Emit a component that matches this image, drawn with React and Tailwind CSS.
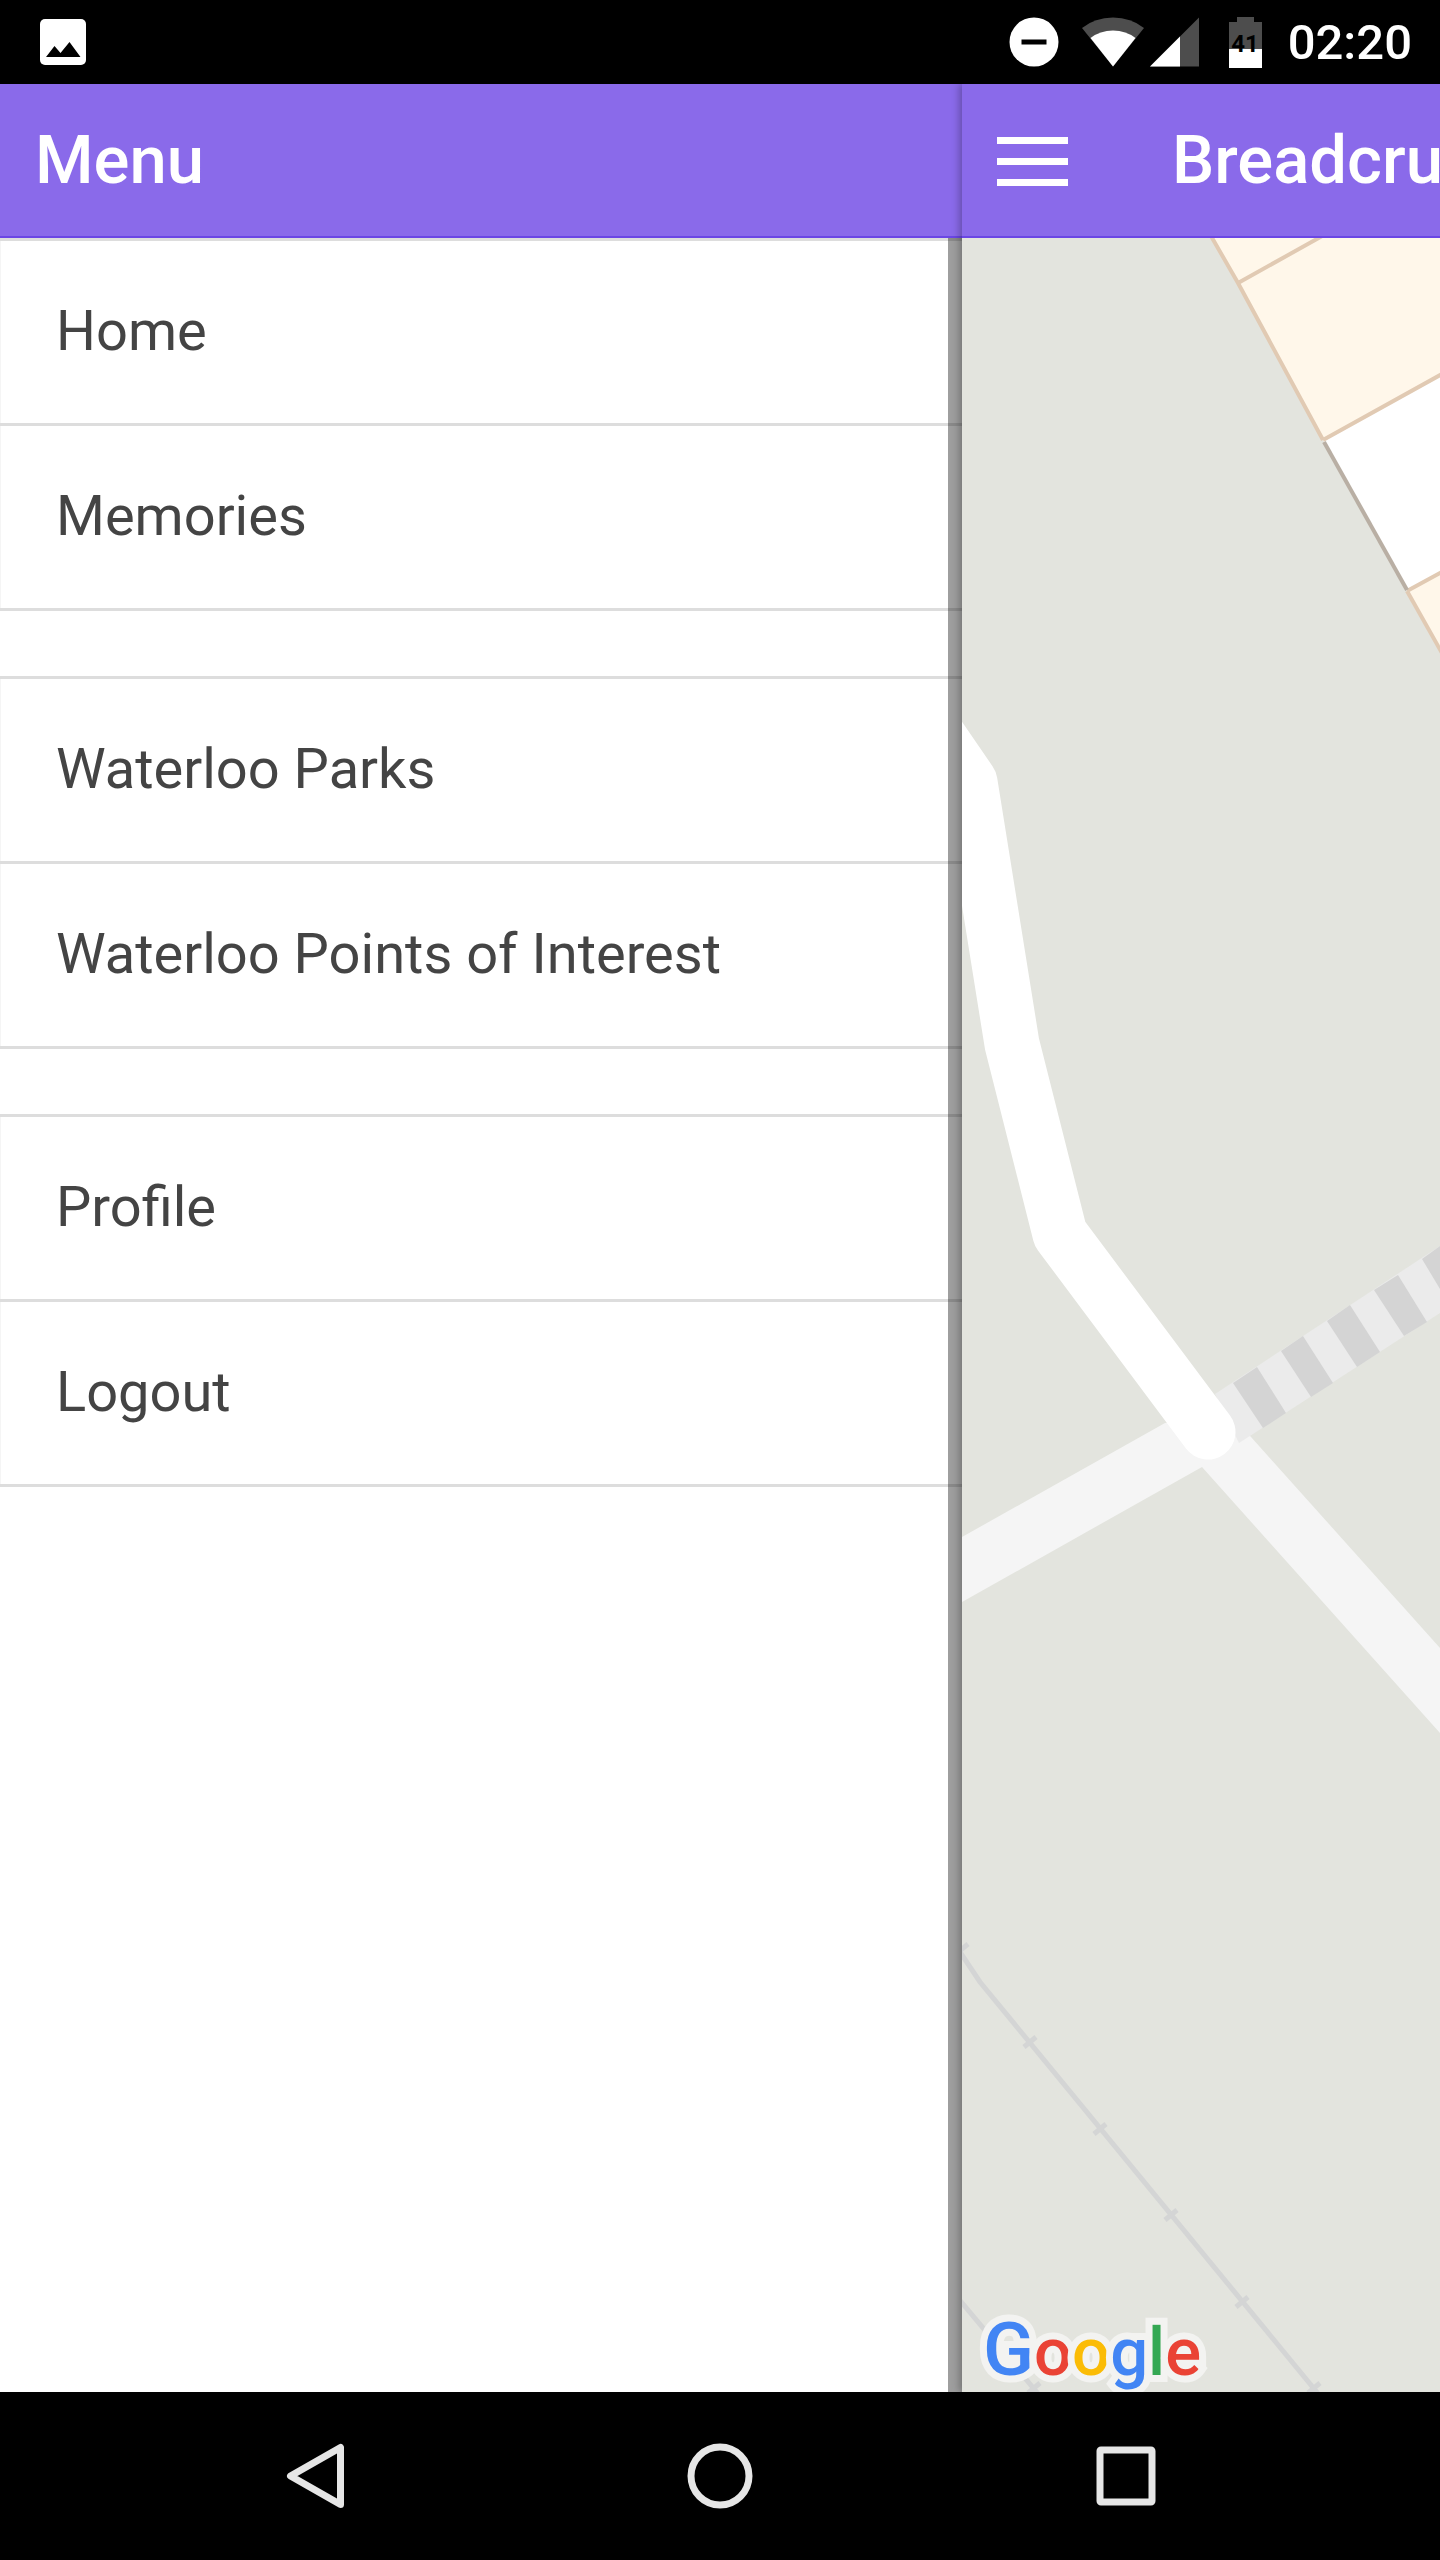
import React from "react";

const groups = [
  ["Home", "Memories"],
  ["Waterloo Parks", "Waterloo Points of Interest"],
  ["Profile", "Logout"],
];

function StatusBar() {
  return (
    <div className="flex h-[84px] shrink-0 items-center justify-between bg-black pl-10 pr-7 text-white">
      <svg className="h-[46px] w-[46px]" viewBox="0 0 46 46" role="img" aria-label="Picture saved">
        <rect width="46" height="46" rx="5" fill="#fff" />
        <path d="M6 38 14.5 27 20.500 34 29.500 23 40.500 38Z" fill="#000" />
      </svg>
      <div className="flex items-center">
        <svg className="mr-[23px] h-[50px] w-[50px]" viewBox="0 0 50 50" role="img" aria-label="Do not disturb">
          <circle cx="25" cy="25" r="24.500" fill="#fff" />
          <rect x="12.500" y="22.500" width="25" height="5" fill="#000" />
        </svg>
        <svg className="mr-1.5 h-[50px] w-[62px]" viewBox="0 0 62 50" role="img" aria-label="Wi-Fi">
          <path d="M31 49.500 0 11Q13 .5 31 .5T62 11Z" fill="#4d4d4d" />
          <path d="M31 49.500 8.500 21Q18 13.500 31 13.500T53.500 21Z" fill="#fff" />
        </svg>
        <svg className="mr-[30px] h-[50px] w-[49px]" viewBox="0 0 49 50" role="img" aria-label="Mobile signal">
          <path d="M0 49.500 49 .5V49.500Z" fill="#4d4d4d" />
          <path d="M0 49.500 30 19.500V49.500Z" fill="#fff" />
        </svg>
        <svg className="mr-[26px] h-[51px] w-[33px]" viewBox="0 0 33 51" role="img" aria-label="Battery 41 percent">
          <path d="M8 0H25V5H33V32H0V5H8Z" fill="#4d4d4d" />
          <rect y="32" width="33" height="19" fill="#fff" />
          <text x="16" y="35" textAnchor="middle" className="font-[Roboto,sans-serif] text-[24px] font-bold" fill="#000">
            41
          </text>
        </svg>
        <span className="pt-0.5 text-[49px] font-medium leading-[60px]">02:20</span>
      </div>
    </div>
  );
}

function MenuPanel() {
  return (
    <aside className="flex min-w-0 flex-col bg-white">
      <header className="flex h-[154px] shrink-0 items-center border-b-2 border-[#6b46e5] bg-[#8a6aea] px-[35px]">
        <h2 className="text-[67px] font-medium leading-[80px] text-white">Menu</h2>
      </header>
      <nav className="relative flex flex-1 flex-col gap-[65px]" aria-label="Menu">
        {groups.map((items) => (
          <ul key={items[0]} className="border-t-[3px] border-[#dddddd]">
            {items.map((item) => (
              <li key={item} className="border-b-[3px] border-[#dddddd]">
                <a
                  href="#"
                  className="flex h-[182px] items-center border-l border-[#f5f5f5] px-[55px] pb-0.5 text-[56px] leading-[64px] text-[#444444]"
                >
                  {item}
                </a>
              </li>
            ))}
          </ul>
        ))}
        <div className="absolute inset-y-0 right-0 w-3.5 bg-black/38" />
      </nav>
    </aside>
  );
}

const railTicks = [
  [962, 1949],
  [1030, 2042],
  [1100, 2129],
  [1171, 2215],
  [1242, 2302],
  [1314, 2388],
  [1034, 2388],
];

function MapView() {
  return (
    <div className="relative min-h-0 flex-1 overflow-hidden bg-[#e3e4de]">
      <svg
        className="absolute inset-0 h-full w-full"
        viewBox="962 238 478 2154"
        preserveAspectRatio="xMinYMin slice"
        aria-hidden="true"
      >
        <path d="M1212 236 1238 283 1323 440 1407 591 1442 653V236Z" fill="#fff7ea" />
        <path d="M1323 440 1442 374V572L1407 591Z" fill="#fff" />
        <g fill="none" stroke="#e1cab3" strokeWidth="4">
          <path d="M1211 236 1238 283 1323 440" />
          <path d="M1407 591 1442 653" />
          <path d="M1238 283 1324 235M1323 440 1442 374M1407 591 1442 572" />
        </g>
        <path d="M1324 442 1407 590" fill="none" stroke="#b9afa4" strokeWidth="4" />

        <path d="M962 1537 1165 1423 1230 1415 1251 1437 1440 1648V1733L1202 1467 962 1602Z" fill="#f5f5f5" />
        <path d="M1215 1394 1440 1246V1313L1239 1443Z" fill="#ebebeb" />
        <g fill="#d4d4d4">
          <path d="M1233 1383 1257 1367 1286 1413 1263 1428Z" />
          <path d="M1281 1351 1303 1336 1333 1383 1311 1397Z" />
          <path d="M1327 1321 1350 1305 1380 1352 1357 1367Z" />
          <path d="M1374 1290 1398 1275 1427 1322 1404 1336Z" />
          <path d="M1422 1259 1440 1246V1289Z" />
        </g>
        <path
          d="M904 686 970 782 1012 1044 1060 1234 1208 1432"
          fill="none"
          stroke="#fff"
          strokeWidth="55"
          strokeLinecap="round"
          strokeLinejoin="round"
        />

        <g fill="none" stroke="#d4d5d5" strokeWidth="5">
          <path d="M958 1949 980 1982 1320 2396" />
          <path d="M958 2298 1040 2396" />
          {railTicks.map(([x, y]) => (
            <path key={`${x}-${y}`} d={`M${x - 6} ${y + 5} ${x + 6} ${y - 5}`} />
          ))}
        </g>
      </svg>
      <a
        href="#"
        aria-label="Google"
        className="absolute bottom-0 left-[21px] text-[67px] font-medium leading-[80px] [-webkit-text-stroke:14px_#f3f3f1] [paint-order:stroke_fill] [stroke-linejoin:round]"
      >
        <span className="text-[75px] leading-none text-[#4285f4]">G</span>
        <span className="text-[#ea4335]">o</span>
        <span className="text-[#fbbc05]">o</span>
        <span className="text-[#4285f4]">g</span>
        <span className="text-[#34a853]">l</span>
        <span className="text-[#ea4335]">e</span>
      </a>
    </div>
  );
}

function MainPanel() {
  return (
    <main className="relative flex min-w-0 flex-col shadow-[-3px_0_7px_rgba(0,0,0,0.25)]">
      <header className="flex h-[154px] shrink-0 items-center overflow-hidden border-b-2 border-[#6b46e5] bg-[#8a6aea] pl-[35px]">
        <button type="button" aria-label="Toggle menu" className="mr-[104px] flex shrink-0 flex-col gap-3.5 pt-0.5">
          <span className="h-[7px] w-[71px] bg-white" />
          <span className="h-[7px] w-[71px] bg-white" />
          <span className="h-[7px] w-[71px] bg-white" />
        </button>
        <h1 className="whitespace-nowrap text-[67px] font-medium leading-[80px] text-white">Breadcru</h1>
      </header>
      <MapView />
    </main>
  );
}

function NavigationBar() {
  return (
    <div className="flex h-[168px] shrink-0 items-center justify-center gap-[340px] bg-black">
      <button type="button" aria-label="Back">
        <svg className="h-[66px] w-[66px]" viewBox="0 0 66 66" fill="none" stroke="#e6e6e6" strokeWidth="7" strokeLinejoin="round">
          <path d="M59.500 4.500V61.500L9.500 33Z" />
        </svg>
      </button>
      <button type="button" aria-label="Home screen">
        <svg className="h-[66px] w-[66px]" viewBox="0 0 66 66" fill="none" stroke="#e6e6e6" strokeWidth="7">
          <circle cx="33" cy="33" r="29" />
        </svg>
      </button>
      <button type="button" aria-label="Recent apps">
        <svg className="h-[66px] w-[66px]" viewBox="0 0 66 66" fill="none" stroke="#e6e6e6" strokeWidth="7" strokeLinejoin="round">
          <rect x="7" y="7" width="52" height="52" rx="1" />
        </svg>
      </button>
    </div>
  );
}

export default function App() {
  return (
    <div className="flex min-h-screen flex-col bg-white font-[Roboto,sans-serif]">
      <StatusBar />
      <div className="grid flex-1 grid-cols-[962fr_478fr] overflow-hidden">
        <MenuPanel />
        <MainPanel />
      </div>
      <NavigationBar />
    </div>
  );
}
